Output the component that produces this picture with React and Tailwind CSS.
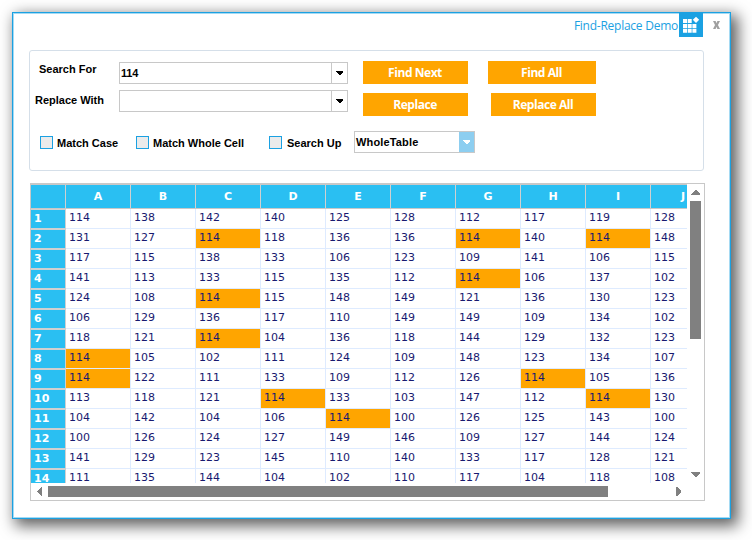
import React from "react";

const COLUMNS = ["A", "B", "C", "D", "E", "F", "G", "H", "I", "J"];

const ROWS = [
  [114, 138, 142, 140, 125, 128, 112, 117, 119, 128],
  [131, 127, 114, 118, 136, 136, 114, 140, 114, 148],
  [117, 115, 138, 133, 106, 123, 109, 141, 106, 115],
  [141, 113, 133, 115, 135, 112, 114, 106, 137, 102],
  [124, 108, 114, 115, 148, 149, 121, 136, 130, 123],
  [106, 129, 136, 117, 110, 149, 149, 109, 134, 102],
  [118, 121, 114, 104, 136, 118, 144, 129, 132, 123],
  [114, 105, 102, 111, 124, 109, 148, 123, 134, 107],
  [114, 122, 111, 133, 109, 112, 126, 114, 105, 136],
  [113, 118, 121, 114, 133, 103, 147, 112, 114, 130],
  [104, 142, 104, 106, 114, 100, 126, 125, 143, 100],
  [100, 126, 124, 127, 149, 146, 109, 127, 144, 124],
  [141, 129, 123, 145, 110, 140, 133, 117, 128, 121],
  [111, 135, 144, 104, 102, 110, 117, 104, 118, 108],
];

function Arrow({ className, points, width, height }) {
  return (
    <svg
      className={`block shrink-0 ${className}`}
      width={width}
      height={height}
      viewBox={`0 0 ${width} ${height}`}
      fill="currentColor"
      shapeRendering="crispEdges"
    >
      <polygon points={points} />
    </svg>
  );
}

function ComboBox({ value, className }) {
  return (
    <div className={`flex h-[22px] w-[229px] shrink-0 border border-[#c8c8c8] bg-white ${className}`}>
      <span className="flex-1 pl-px leading-[21px] tracking-[-0.2px]">{value}</span>
      <span className="flex w-[16px] items-center justify-center border-l border-[#c8c8c8]">
        <Arrow className="text-black" width={7} height={4} points="0,0 7,0 7,1 4,4 3,4 0,1" />
      </span>
    </div>
  );
}

function Button({ children, className }) {
  return (
    <button
      className={`h-[23px] shrink-0 bg-[#ffa500] pr-px text-center font-['Open_Sans',sans-serif] text-[12px] leading-[23px] font-bold tracking-[-0.45px] text-white ${className}`}
    >
      {children}
    </button>
  );
}

function Check({ label, className }) {
  return (
    <label className={`flex shrink-0 items-center gap-1 ${className}`}>
      <span className="size-[13px] shrink-0 border border-[#1ba1e2] bg-[#ebebeb]" />
      <span className="pt-[2px] whitespace-nowrap">{label}</span>
    </label>
  );
}

function TitleBar() {
  return (
    <header className="flex h-[37px] shrink-0 items-start justify-end pr-[10px]">
      <span className="mr-px pt-[4px] font-['Open_Sans',sans-serif] text-[12px] leading-[18px] tracking-[-0.25px] whitespace-nowrap text-[#1ba1e2]">
        Find-Replace Demo
      </span>
      <svg className="block shrink-0" width="24" height="24" viewBox="0 0 24 24">
        <rect width="24" height="24" fill="#1ba1e2" />
        <g fill="#fff">
          <path d="M4 6h4v4H4zM8.7 6h4v4h-4zM4 11h4v4H4zM8.7 11h4v4h-4zM13.4 11h4v4h-4zM4 15.8h4v4H4zM8.7 15.8h4v4h-4zM13.4 15.8h4v4h-4z" />
          <path d="M17 3.7 20.2 6.8 17 9.9 13.8 6.8z" />
        </g>
      </svg>
      <svg
        className="mt-[8px] ml-[10px] block shrink-0"
        width="7"
        height="8"
        viewBox="0 0 8 9"
        preserveAspectRatio="none"
      >
        <path d="M0 0h3l1 2.5L5 0h3L5.7 4.5 8 9H5L4 6.5 3 9H0l2.3-4.5z" fill="#a0a0a0" />
      </svg>
    </header>
  );
}

function SearchPanel() {
  return (
    <section className="ml-4 flex h-[121px] w-[675px] shrink-0 flex-col rounded-[3px] border border-[#d5dfe9] pt-[10px] font-['Liberation_Sans',sans-serif] text-[11px] font-bold text-black">
      <div className="flex h-[29px]">
        <span className="w-[89px] pl-[9px] leading-[17px]">Search For</span>
        <ComboBox value="114" className="mt-px" />
        <Button className="ml-[15px] w-[105px]">Find Next</Button>
        <Button className="ml-5 w-[108px]">Find All</Button>
      </div>
      <div className="flex h-[41px]">
        <span className="w-[89px] pt-[2px] pl-[5px] leading-[17px]">Replace With</span>
        <ComboBox value="" />
        <Button className="mt-[3px] ml-[15px] w-[105px]">Replace</Button>
        <Button className="mt-[3px] ml-[23px] w-[105px]">Replace All</Button>
      </div>
      <div className="flex h-[22px]">
        <Check label="Match Case" className="ml-[10px] w-[96px]" />
        <Check label="Match Whole Cell" className="w-[133px]" />
        <Check label="Search Up" className="w-[85px] gap-[5px]" />
        <div className="flex w-[121px] border border-[#c8c8c8] bg-white">
          <span className="flex-1 pl-px leading-[20px] tracking-[0.15px]">WholeTable</span>
          <span className="flex w-[15px] items-center justify-center bg-[#8dcef0]">
            <Arrow className="text-white" width={7} height={4} points="0,0 7,0 7,1 4,4 3,4 0,1" />
          </span>
        </div>
      </div>
    </section>
  );
}

function DataGrid() {
  return (
    <section className="mt-3 ml-[17px] flex h-[318px] w-[675px] shrink-0 flex-col border border-[#c8c8c8] font-['DejaVu_Sans',sans-serif] text-[11px]">
      <div className="flex h-[299px] shrink-0">
        <div className="w-[656px] shrink-0 overflow-hidden">
          <div className="flex h-[25px] w-[685px] border-y border-[#c8c8c8] bg-[#2abff2] font-bold text-white">
            <span className="w-[35px] border-r border-[#d0d0d0]" />
            {COLUMNS.map((name) => (
              <span key={name} className="w-[65px] border-r border-[#d0d0d0] text-center leading-[23px]">
                {name}
              </span>
            ))}
          </div>
          {ROWS.map((cells, row) => (
            <div key={row} className="flex h-5 w-[685px]">
              <span className="w-[35px] border-t border-r border-b border-[#d0d0d0] bg-[#2abff2] pt-1 pl-[3px] leading-[9px] font-bold text-white">
                {row + 1}
              </span>
              {cells.map((value, column) => (
                <span
                  key={column}
                  className={`w-[65px] border-r border-b border-[#deebff] pl-[3px] leading-[17px] text-[#191970] ${
                    value === 114 && row + column > 0 ? "bg-[#ffa500] bg-clip-padding" : ""
                  }`}
                >
                  {value}
                </span>
              ))}
            </div>
          ))}
        </div>
        <div className="flex w-[17px] flex-col items-center pt-[6px]">
          <Arrow className="text-[#808080]" width={9} height={5} points="4,0 5,0 9,4 9,5 0,5 0,4" />
          <div className="mt-[6px] h-[138px] w-[11px] shrink-0 bg-[#808080]" />
          <Arrow className="mt-[133px] text-[#808080]" width={9} height={5} points="0,0 9,0 9,1 5,5 4,5 0,1" />
        </div>
      </div>
      <div className="flex h-[17px] items-center pl-[6px]">
        <Arrow className="text-[#808080]" width={5} height={9} points="5,0 5,9 4,9 0,5 0,4 4,0" />
        <div className="ml-[6px] h-[11px] w-[560px] shrink-0 bg-[#808080]" />
        <Arrow className="ml-[68px] text-[#808080]" width={5} height={9} points="0,0 1,0 5,4 5,5 1,9 0,9" />
      </div>
    </section>
  );
}

export default function App() {
  return (
    <main className="h-[540px] w-[752px] overflow-hidden bg-white p-3">
      <div className="flex h-[507px] w-[719px] flex-col border border-[#1ba1e2] bg-white shadow-[inset_0_0_0_1px_#a5daf3,5px_5px_14px_2px_rgba(0,0,0,0.62)]">
        <TitleBar />
        <SearchPanel />
        <DataGrid />
      </div>
    </main>
  );
}
